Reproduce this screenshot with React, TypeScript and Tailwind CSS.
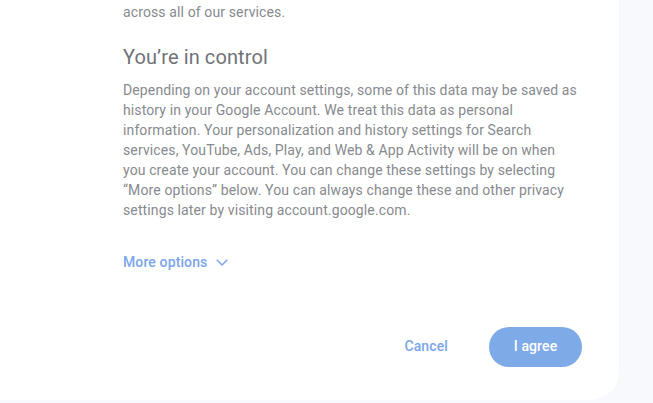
export default function App() {
  return (
    <div className="h-[403px] w-[653px] overflow-hidden bg-[#f8f9fc] font-['Roboto',sans-serif] tracking-[0.12px]">
      <div className="flex h-[400px] w-[619px] flex-col rounded-br-[28px] bg-white pl-[123px] pr-[20px]">
        {/* Intro tail */}
        <p className="mt-[2px] text-[14px] leading-[20px] text-[#878a8e]">across all of our services.</p>

        {/* Section */}
        <h2 className="mt-[21px] text-[20px] leading-[28px] tracking-[0.1px] text-[#6f7377]">You’re in control</h2>
        <p className="mt-[9px] text-[14px] leading-[20px] text-[#878a8e]">
          Depending on your account settings, some of this data may be saved as
          <br />
          history in your Google Account. We treat this data as personal
          <br />
          information. Your personalization and history settings for Search
          <br />
          services, YouTube, Ads, Play, and Web &amp; App Activity will be on when
          <br />
          you create your account. You can change these settings by selecting
          <br />
          “More options” below. You can always change these and other privacy
          <br />
          settings later by visiting account.google.com.
        </p>

        {/* More options */}
        <button className="mt-[32px] flex items-center gap-[6px] self-start text-[14px] font-medium leading-[20px] text-[#7ba6ea]">
          More options
          <svg width="18" height="18" viewBox="0 0 24 24" fill="none" stroke="currentColor" strokeWidth="2">
            <path d="M5 9l7 7 7-7" />
          </svg>
        </button>

        {/* Actions */}
        <div className="mt-[54px] flex items-center justify-end gap-[41px] pr-[17px]">
          <button className="rounded-full py-[10px] text-[14px] font-medium text-[#7ba6ea]">Cancel</button>
          <button className="h-[40px] w-[93px] rounded-full bg-[#7faae8] text-[14px] font-medium text-white">I agree</button>
        </div>
      </div>
    </div>
  );
}
